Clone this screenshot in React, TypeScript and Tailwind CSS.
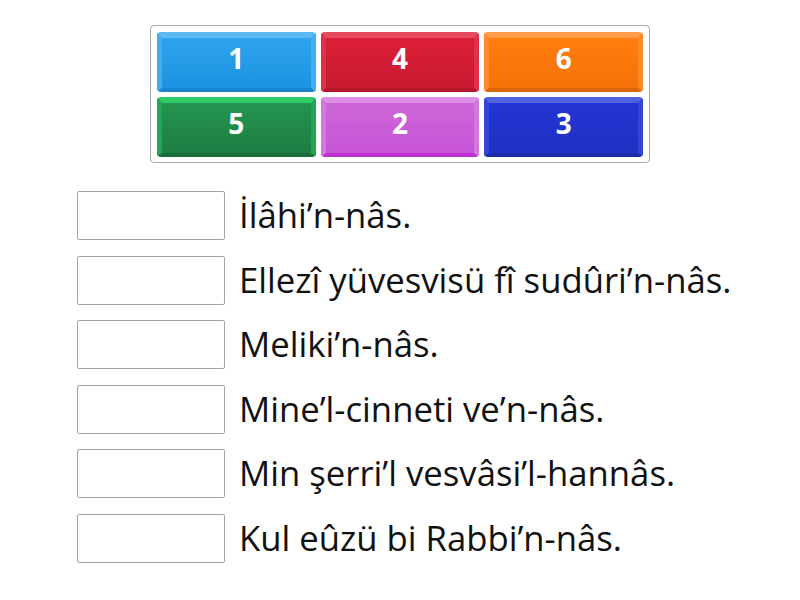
const tiles = [
  { n: '1', light: 'border-[#5cb8f0]', side: 'border-x-[#45aced]', dark: 'border-b-[#1a85cf]', bg: 'bg-gradient-to-b from-[#2ea3ec] to-[#1b93e2]' },
  { n: '4', light: 'border-[#e5495e]', side: 'border-x-[#de3048]', dark: 'border-b-[#b51528]', bg: 'bg-gradient-to-b from-[#dc1f38] to-[#c71a31]' },
  { n: '6', light: 'border-[#ff9c4a]', side: 'border-x-[#ff8a2a]', dark: 'border-b-[#d86606]', bg: 'bg-gradient-to-b from-[#ff7c0d] to-[#f57209]' },
  { n: '5', light: 'border-[#2ecc66]', side: 'border-x-[#23a552]', dark: 'border-b-[#1a6e3a]', bg: 'bg-gradient-to-b from-[#249450] to-[#1e7e44]' },
  { n: '2', light: 'border-[#de8ee6]', side: 'border-x-[#d478de]', dark: 'border-b-[#c02fd0]', bg: 'bg-gradient-to-b from-[#cd66d8] to-[#c753d6]' },
  { n: '3', light: 'border-[#5062dc]', side: 'border-x-[#3445d6]', dark: 'border-b-[#1a2aa8]', bg: 'bg-gradient-to-b from-[#2235d2] to-[#1f30c4]' },
];

const rows = [
  'İlâhi’n-nâs.',
  'Ellezî yüvesvisü fî sudûri’n-nâs.',
  'Meliki’n-nâs.',
  'Mine’l-cinneti ve’n-nâs.',
  'Min şerri’l vesvâsi’l-hannâs.',
  'Kul eûzü bi Rabbi’n-nâs.',
];

export default function App() {
  return (
    <div
      className="w-[800px] h-[600px] bg-white pt-[25px]"
      style={{ fontFamily: '"Open Sans", "Noto Sans", sans-serif' }}
    >
      {/* answer tiles */}
      <div className="mx-auto w-[500px] h-[138px] border border-[#a8a8a8] rounded-[4px] px-[6px] py-[6px] grid grid-cols-3 gap-[5px]">
        {tiles.map((t) => (
          <div
            key={t.n}
            className={`h-[60px] rounded-[4px] border-t-[6px] border-x-[5px] border-b-[4px] ${t.light} ${t.side} ${t.dark} ${t.bg} flex items-center justify-center pb-[10px] text-white font-bold text-[28px] leading-none`}
          >
            {t.n}
          </div>
        ))}
      </div>

      {/* drop rows */}
      <div className="pl-[77px] pt-[28px] flex flex-col gap-[15.5px]">
        {rows.map((r) => (
          <div key={r} className="flex items-center h-[49px]">
            <div className="w-[148px] h-[49px] border border-[#a4a4a4] rounded-[2px] bg-white shrink-0" />
            <span className="ml-[14px] text-[34.7px] text-[#111] leading-none whitespace-nowrap">{r}</span>
          </div>
        ))}
      </div>
    </div>
  );
}
